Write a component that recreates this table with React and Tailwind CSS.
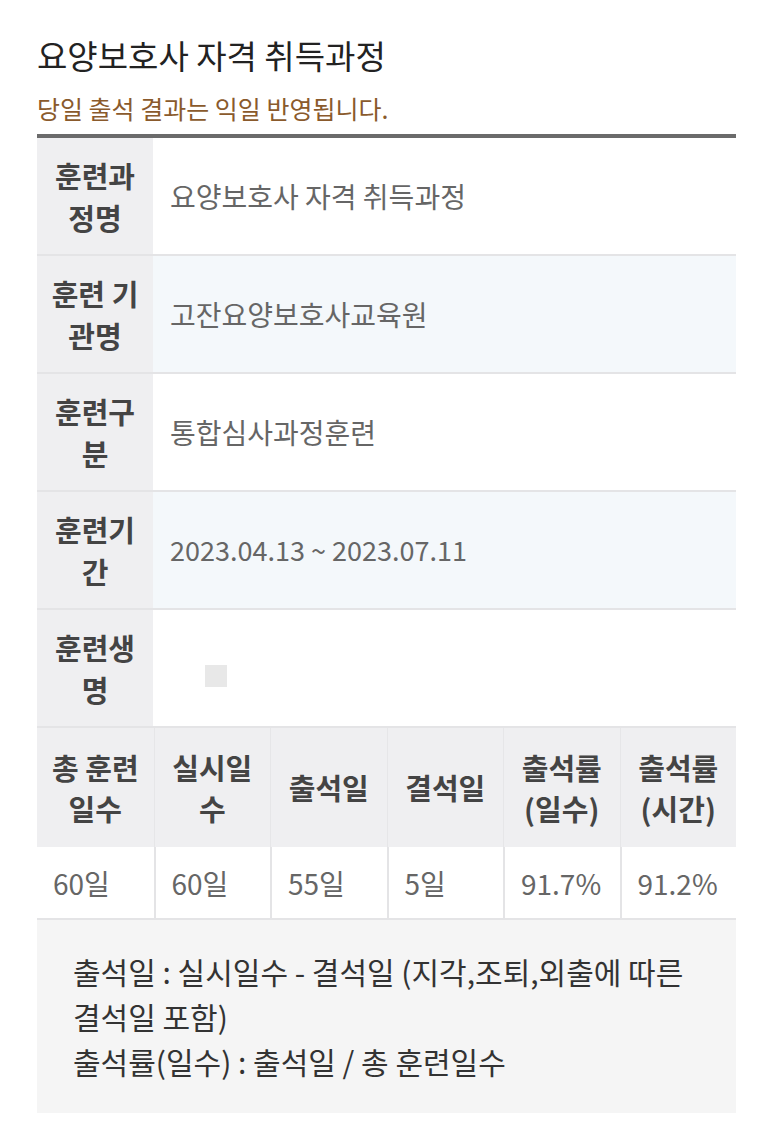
import React from "react";

const font = { fontFamily: '"Noto Sans CJK KR", "Noto Sans", sans-serif' };

const rows = [
  { label: ["훈련과", "정명"], value: "요양보호사 자격 취득과정", bg: "bg-white", size: "text-[28px]" },
  { label: ["훈련 기", "관명"], value: "고잔요양보호사교육원", bg: "bg-[#f4f8fb]", size: "text-[28px]" },
  { label: ["훈련구", "분"], value: "통합심사과정훈련", bg: "bg-white", size: "text-[28px]" },
  { label: ["훈련기", "간"], value: "2023.04.13 ~ 2023.07.11", bg: "bg-[#f4f8fb]", size: "text-[27px]" },
  { label: ["훈련생", "명"], value: null, bg: "bg-white", size: "text-[28px]" },
];

const heads = [
  ["총 훈련", "일수"],
  ["실시일", "수"],
  ["출석일"],
  ["결석일"],
  ["출석률", "(일수)"],
  ["출석률", "(시간)"],
];

const vals = ["60일", "60일", "55일", "5일", "91.7%", "91.2%"];

export default function App() {
  return (
    <div className="w-[773px] min-h-[1141px] bg-white px-[37px] pt-[34px]" style={font}>
      {/* Title */}
      <h1 className="text-[33px] leading-[42px] text-[#222]">
        요양보호사 자격 취득과정
      </h1>
      <p className="mt-[16px] text-[25px] leading-[32px] text-[#8a5a2c]">
        당일 출석 결과는 익일 반영됩니다.
      </p>

      {/* Info table */}
      <div className="mt-[10px] border-t-4 border-[#6b6b6b]">
        {rows.map((r, i) => (
          <div key={i} className="grid grid-cols-[116px_1fr] h-[118px] border-b-2 border-[#e4e4e6]">
            <div className="bg-[#efeff1] flex items-center justify-center text-center text-[29px] leading-[42px] font-bold text-[#444]">
              <div>
                {r.label[0]}
                <br />
                {r.label[1]}
              </div>
            </div>
            <div className={`${r.bg} flex items-center pl-[17px] ${r.size} text-[#666]`}>
              {r.value ? r.value : <span className="ml-[35px] mt-[15px] w-[22px] h-[22px] bg-[#e8e8e8]" />}
            </div>
          </div>
        ))}

        {/* Stats */}
        <div className="grid grid-cols-6 h-[119px] bg-[#efeff1]">
          {heads.map((h, i) => (
            <div
              key={i}
              className={`flex items-center justify-center text-center text-[29px] leading-[41px] font-bold text-[#444] ${i > 0 ? "border-l border-[#e6e6e8]" : ""}`}
            >
              <div>
                {h.map((l, j) => (
                  <div key={j}>{l}</div>
                ))}
              </div>
            </div>
          ))}
        </div>
        <div className="grid grid-cols-6 h-[73px] bg-white border-b-2 border-[#e4e4e6]">
          {vals.map((v, i) => (
            <div
              key={i}
              className={`flex items-center pl-[16px] text-[28px] text-[#666] ${i > 0 ? "border-l-2 border-[#e4e4e6]" : ""}`}
            >
              {v}
            </div>
          ))}
        </div>

        {/* Note */}
        <div className="bg-[#f5f5f5] pl-[36px] pt-[29px] pb-[29px] text-[30px] leading-[45px] text-[#333]">
          <div>출석일 : 실시일수 - 결석일 (지각,조퇴,외출에 따른</div>
          <div>결석일 포함)</div>
          <div>출석률(일수) : 출석일 / 총 훈련일수</div>
        </div>
      </div>
    </div>
  );
}
